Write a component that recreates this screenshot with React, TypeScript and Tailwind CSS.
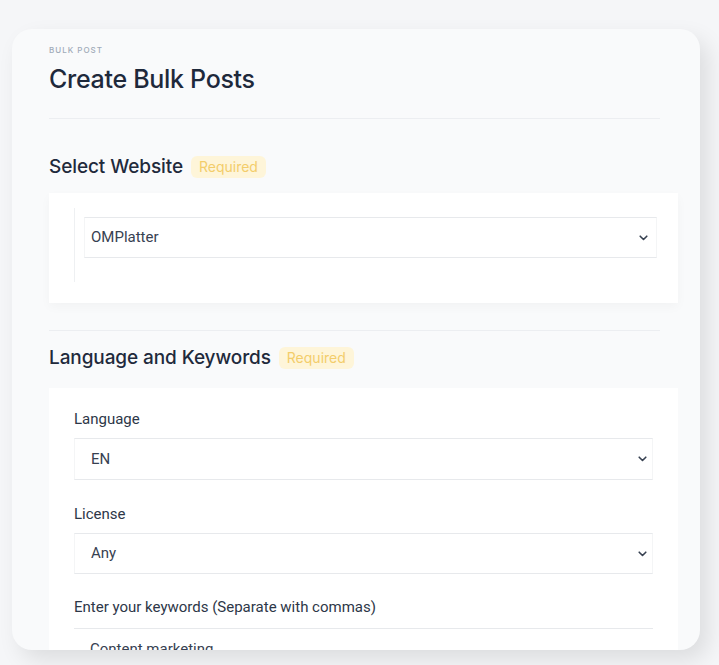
import React from 'react';

/* ──────────────────────────────────────────────
 * Small pieces
 * ────────────────────────────────────────────── */

function Chevron() {
  return (
    <svg width="9" height="6" viewBox="0 0 9 6" className="shrink-0">
      <path d="M1.2 1.2 L4.5 4.5 L7.8 1.2" fill="none" stroke="#374151" strokeWidth="1.6" strokeLinecap="round" strokeLinejoin="round" />
    </svg>
  );
}

function RequiredBadge() {
  return (
    <span className="ml-2 rounded-md bg-[#fef5d9] px-2 py-[3px] text-[14px] leading-4 text-[#f3cd6b] font-['Inter',sans-serif]">
      Required
    </span>
  );
}

function SectionTitle({ children }: { children: React.ReactNode }) {
  return (
    <div className="flex h-6 items-center">
      <h2 className="text-[19px] font-medium tracking-[-0.1px] text-[#1f2a3c] font-['Inter',sans-serif]">{children}</h2>
      <RequiredBadge />
    </div>
  );
}

function SelectBox({ value, inset = 'pl-4 pr-[5px]', height = 'h-[42px]' }: { value: string; inset?: string; height?: string }) {
  return (
    <div className={`flex ${height} items-center justify-between border-y border-[#e7e9ec] border-x border-x-[#f4f5f6] bg-white ${inset}`}>
      <span className="text-[15px] text-[#374151] font-['Roboto',sans-serif]">{value}</span>
      <Chevron />
    </div>
  );
}

function Label({ children }: { children: React.ReactNode }) {
  return <div className="text-[15px] leading-5 text-[#2d3748] font-['Roboto',sans-serif]">{children}</div>;
}

/* ──────────────────────────────────────────────
 * Page
 * ────────────────────────────────────────────── */

export default function App() {
  return (
    <div className="h-[665px] w-[719px] overflow-hidden bg-[#f5f6f8] pl-3 pt-[29px] font-['Inter',sans-serif]">
      <div className="h-[621px] w-[688px] overflow-hidden rounded-[20px] bg-[#f9fafb] pl-[37px] pr-[22px] pt-[15px] shadow-[8px_10px_22px_rgba(0,0,0,0.1)]">
        <div className="text-[8px] font-medium tracking-[1px] text-[#a0aab8]">BULK POST</div>
        <h1 className="mt-[7px] text-[25px] font-medium leading-8 tracking-[-0.3px] text-[#1e293b]">Create Bulk Posts</h1>

        <div className="mt-[23px] mr-[18px] h-px bg-[#eceef1]" />

        {/* Select website */}
        <div className="mt-[36px]">
          <SectionTitle>Select Website</SectionTitle>
        </div>
        <div className="mt-[14px] h-[110px] bg-white pt-[15px] pl-[25px] pr-[21px] shadow-[0_4px_10px_rgba(0,0,0,0.03)]">
          <div className="h-[74px] border-l border-[#eef0f2] pl-[9px] pt-[9px]">
            <SelectBox value="OMPlatter" inset="pl-[6px] pr-[8px]" height="h-[41px]" />
          </div>
        </div>

        <div className="mt-[27px] mr-[18px] h-px bg-[#eceef1]" />

        {/* Language and keywords */}
        <div className="mt-[15px]">
          <SectionTitle>Language and Keywords</SectionTitle>
        </div>
        <div className="mt-[18px] bg-white pl-[25px] pr-[25px] pt-[21px] pb-6">
          <Label>Language</Label>
          <div className="h-[9px]" />
          <SelectBox value="EN" />
          <div className="h-[24px]" />
          <Label>License</Label>
          <div className="h-[9px]" />
          <SelectBox value="Any" height="h-[41px]" />
          <div className="h-[23px]" />
          <Label>Enter your keywords (Separate with commas)</Label>
          <div className="h-[11px]" />
          <div className="flex h-[42px] items-center border-y border-[#e7e9ec] bg-white pl-4">
            <span className="text-[15px] text-[#374151] font-['Roboto',sans-serif]">Content marketing</span>
          </div>
        </div>
      </div>
    </div>
  );
}
